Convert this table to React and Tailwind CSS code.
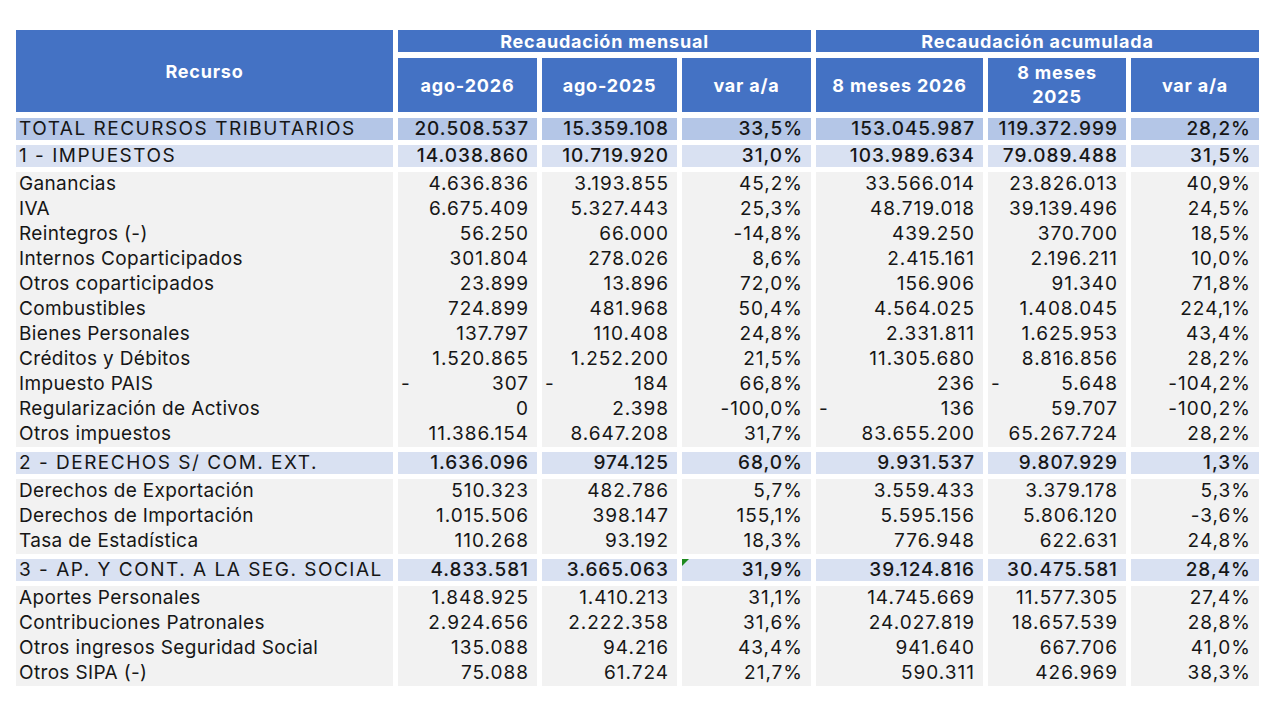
import React from "react";

const COLS = "grid grid-cols-[377px_139px_135px_129px_167px_138px_128px] gap-x-[5px]";

const rows = [
  { t: "total", c: ["TOTAL RECURSOS TRIBUTARIOS", "20.508.537", "15.359.108", "33,5%", "153.045.987", "119.372.999", "28,2%"] },
  { t: "group", c: ["1 - IMPUESTOS", "14.038.860", "10.719.920", "31,0%", "103.989.634", "79.089.488", "31,5%"] },
  { t: "data", c: ["Ganancias", "4.636.836", "3.193.855", "45,2%", "33.566.014", "23.826.013", "40,9%"] },
  { t: "data", c: ["IVA", "6.675.409", "5.327.443", "25,3%", "48.719.018", "39.139.496", "24,5%"] },
  { t: "data", c: ["Reintegros (-)", "56.250", "66.000", "-14,8%", "439.250", "370.700", "18,5%"] },
  { t: "data", c: ["Internos Coparticipados", "301.804", "278.026", "8,6%", "2.415.161", "2.196.211", "10,0%"] },
  { t: "data", c: ["Otros coparticipados", "23.899", "13.896", "72,0%", "156.906", "91.340", "71,8%"] },
  { t: "data", c: ["Combustibles", "724.899", "481.968", "50,4%", "4.564.025", "1.408.045", "224,1%"] },
  { t: "data", c: ["Bienes Personales", "137.797", "110.408", "24,8%", "2.331.811", "1.625.953", "43,4%"] },
  { t: "data", c: ["Créditos y Débitos", "1.520.865", "1.252.200", "21,5%", "11.305.680", "8.816.856", "28,2%"] },
  { t: "data", c: ["Impuesto PAIS", "307", "184", "66,8%", "236", "5.648", "-104,2%"], neg: [1, 2, 5] },
  { t: "data", c: ["Regularización de Activos", "0", "2.398", "-100,0%", "136", "59.707", "-100,2%"], neg: [4] },
  { t: "data", c: ["Otros impuestos", "11.386.154", "8.647.208", "31,7%", "83.655.200", "65.267.724", "28,2%"] },
  { t: "group", c: ["2 - DERECHOS S/ COM. EXT.", "1.636.096", "974.125", "68,0%", "9.931.537", "9.807.929", "1,3%"] },
  { t: "data", c: ["Derechos de Exportación", "510.323", "482.786", "5,7%", "3.559.433", "3.379.178", "5,3%"] },
  { t: "data", c: ["Derechos de Importación", "1.015.506", "398.147", "155,1%", "5.595.156", "5.806.120", "-3,6%"] },
  { t: "data", c: ["Tasa de Estadística", "110.268", "93.192", "18,3%", "776.948", "622.631", "24,8%"] },
  { t: "group", c: ["3 - AP. Y CONT. A LA SEG. SOCIAL", "4.833.581", "3.665.063", "31,9%", "39.124.816", "30.475.581", "28,4%"], tri: 3 },
  { t: "data", c: ["Aportes Personales", "1.848.925", "1.410.213", "31,1%", "14.745.669", "11.577.305", "27,4%"] },
  { t: "data", c: ["Contribuciones Patronales", "2.924.656", "2.222.358", "31,6%", "24.027.819", "18.657.539", "28,8%"] },
  { t: "data", c: ["Otros ingresos Seguridad Social", "135.088", "94.216", "43,4%", "941.640", "667.706", "41,0%"] },
  { t: "data", c: ["Otros SIPA (-)", "75.088", "61.724", "21,7%", "590.311", "426.969", "38,3%"] },
];

function Row({ r, prev }) {
  const bold = r.t !== "data";
  const bg = r.t === "total" ? "bg-[#b4c6e7]" : r.t === "group" ? "bg-[#d9e1f2]" : "bg-[#f2f2f2]";
  const h = bold ? "h-[22px]" : "h-[25px]";
  const mt = !prev ? "mt-[6px]" : bold || prev.t !== "data" ? "mt-[5px]" : "";
  return (
    <div className={`${COLS} ${mt}`}>
      {r.c.map((v, i) => {
        const isNeg = r.neg && r.neg.includes(i);
        const label = i === 0;
        const cls = label
          ? `justify-start pl-[3px] ${bold ? "tracking-[1.5px]" : "tracking-[0.35px]"}`
          : `justify-end pr-[8px] tracking-[1px] ${bold ? "font-medium" : ""}`;
        return (
          <div key={i} className={`${bg} ${h} relative flex items-center whitespace-nowrap ${cls}`}>
            {isNeg && <span className="absolute left-[3px]">-</span>}
            {r.tri === i && (
              <span className="absolute left-0 top-0 w-0 h-0 border-t-[7px] border-t-[#1e8a1e] border-r-[7px] border-r-transparent" />
            )}
            <span>{v}</span>
          </div>
        );
      })}
    </div>
  );
}

const H = "bg-[#4472c4] flex items-center justify-center";

export default function App() {
  return (
    <div className="w-[1280px] h-[720px] bg-white overflow-hidden" style={{ fontFamily: "Inter, 'Liberation Sans', sans-serif" }}>
      <div className="pl-[16px] pt-[30px] text-[19px] text-[#161616]">
        <div className={`${COLS} grid-rows-[22px_54px] gap-y-[6px] text-white font-bold text-[18px] tracking-[0.8px]`}>
          <div className={`row-span-2 ${H}`}>Recurso</div>
          <div className={`col-span-3 ${H}`}>Recaudación mensual</div>
          <div className={`col-span-3 ${H}`}>Recaudación acumulada</div>
          <div className={H}>ago-2026</div>
          <div className={H}>ago-2025</div>
          <div className={H}>var a/a</div>
          <div className={H}>8 meses 2026</div>
          <div className={`${H} text-center leading-[24px]`}>8 meses<br />2025</div>
          <div className={H}>var a/a</div>
        </div>
        <div className="flex flex-col">
          {rows.map((r, i) => (
            <Row key={i} r={r} prev={rows[i - 1]} />
          ))}
        </div>
      </div>
    </div>
  );
}
